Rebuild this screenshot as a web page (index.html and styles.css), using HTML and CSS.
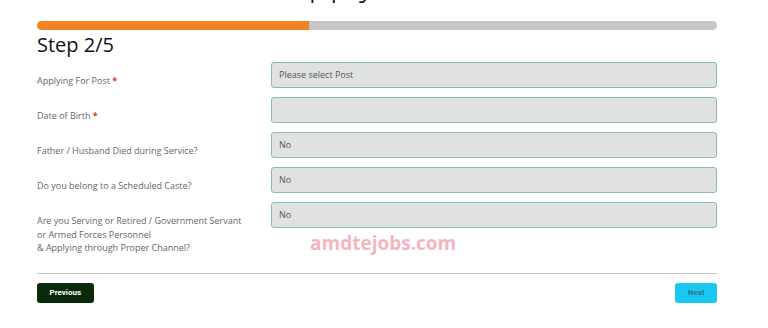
FILE: index.html
```html
<!DOCTYPE html>
<html lang="en">
<head>
<meta charset="utf-8">
<title>Apply Online - Step 2/5</title>
<link rel="stylesheet" href="styles.css">
</head>
<body>
<div class="page">
  <h1 class="page-title">Apply Online</h1>
  <div class="progress"><div class="progress-fill" style="width:40%"></div></div>
  <h2 class="step">Step 2/5</h2>
  <form class="form">
    <div class="row">
      <label class="label">Applying For Post <span class="req">*</span></label>
      <div class="field">Please select Post</div>
    </div>
    <div class="row">
      <label class="label">Date of Birth <span class="req">*</span></label>
      <div class="field"></div>
    </div>
    <div class="row">
      <label class="label">Father / Husband Died during Service?</label>
      <div class="field">No</div>
    </div>
    <div class="row">
      <label class="label">Do you belong to a Scheduled Caste?</label>
      <div class="field">No</div>
    </div>
    <div class="row">
      <label class="label">Are you Serving or Retired / Government Servant<br>or Armed Forces Personnel<br>&amp; Applying through Proper Channel?</label>
      <div class="field">No</div>
    </div>
  </form>
  <hr class="divider">
  <div class="actions">
    <button class="btn btn-prev" type="button">Previous</button>
    <button class="btn btn-next" type="button">Next</button>
  </div>
  <div class="watermark">amdtejobs.com</div>
</div>
</body>
</html>
```

FILE: styles.css
```css
html, body {
  margin: 0;
  padding: 0;
  background: #ffffff;
}
body {
  font-family: "Open Sans", "Noto Sans", sans-serif;
  overflow: hidden;
}
.page {
  display: flow-root;
  position: relative;
  width: 680px;
  margin-left: 37px;
}
.page-title {
  margin: -37px 0 0 0;
  padding-left: 24px;
  font-size: 36px;
  line-height: 36px;
  font-weight: 300;
  text-align: center;
  color: #111;
  height: 36px;
}
.progress {
  margin-top: 22px;
  height: 9px;
  border-radius: 5px;
  background: #c6c6c6;
  overflow: hidden;
}
.progress-fill {
  height: 100%;
  background: #f58220;
  border-radius: 5px 0 0 5px;
}
.step {
  margin: 3px 0 0 0;
  font-size: 20px;
  line-height: 24px;
  font-weight: 400;
  color: #111;
}
.form {
  margin-top: 5px;
  display: flex;
  flex-direction: column;
  gap: 9px;
}
.row {
  display: grid;
  grid-template-columns: 234px 1fr;
  align-items: start;
}
.label {
  padding-top: 12px;
  font-size: 9px;
  line-height: 13.5px;
  color: #666;
}
.req {
  color: #d9342b;
  font-weight: 700;
}
.field {
  box-sizing: border-box;
  height: 26px;
  background: #e0e2e2;
  border: 1px solid #86bdb3;
  border-radius: 3px;
  padding: 0 7px;
  font-size: 9px;
  line-height: 24px;
  color: #555;
}
.divider {
  margin: 18px 0 0 0;
  border: 0;
  border-top: 1px solid #c8c8c8;
  height: 0;
}
.actions {
  margin-top: 9px;
  display: flex;
  justify-content: space-between;
}
.btn {
  height: 20px;
  border: 0;
  border-radius: 3px;
  padding: 0 12.5px;
  font-family: Roboto, "Liberation Sans", sans-serif;
  font-size: 8px;
  font-weight: 700;
  cursor: pointer;
}
.btn-prev {
  background: #0b2a0b;
  color: #ffffff;
}
.btn-next {
  background: #18c8ee;
  color: #2a7893;
}
.watermark {
  position: absolute;
  left: 273px;
  top: 233px;
  font-size: 19px;
  line-height: 20px;
  font-weight: 700;
  color: #f5b5c0;
}
```
